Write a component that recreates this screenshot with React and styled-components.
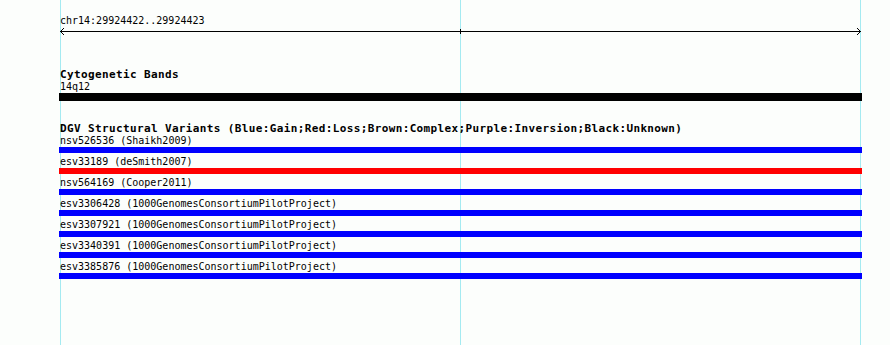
import React from 'react'
import styled, {createGlobalStyle} from 'styled-components'

const GlobalStyle = createGlobalStyle`
  html, body {
    margin: 0;
    padding: 0;
    background: #fcfefc;
  }
`

const GRID = '#a4eaf1'

const Panel = styled.div`
  width: 890px;
  height: 345px;
  box-sizing: border-box;
  padding: 15px 0 0 59px;
  display: flex;
  flex-direction: column;
  background-color: #fcfefc;
  background-image:
    linear-gradient(${GRID}, ${GRID}),
    linear-gradient(${GRID}, ${GRID}),
    linear-gradient(${GRID}, ${GRID});
  background-size: 1px 100%;
  background-position: 60px 0, 460px 0, 860px 0;
  background-repeat: no-repeat;
  font-family: "DejaVu Sans Mono", "Liberation Mono", monospace;
  color: #000;
`

const Label = styled.div`
  margin-left: 1px;
  font-size: 10px;
  line-height: 12px;
  height: 12px;
  white-space: nowrap;
`

const TrackTitle = styled.div`
  margin-left: 1px;
  margin-top: ${p => p.$top}px;
  font-size: 11px;
  font-weight: bold;
  letter-spacing: 0.37px;
  line-height: 12px;
  height: 12px;
  white-space: nowrap;
`

const Section = styled.div`
  display: flex;
  flex-direction: column;
`

const RulerSvg = styled.svg`
  display: block;
  margin-left: 1px;
`

const Bar = styled.div`
  width: 803px;
  height: ${p => p.$h}px;
  margin-top: ${p => p.$top || 0}px;
  margin-bottom: ${p => p.$bottom || 0}px;
  background: ${p => p.$color};
`

const Rows = styled.div`
  display: flex;
  flex-direction: column;
`

const Row = styled.div`
  display: flex;
  flex-direction: column;
`

const variants = [
  {id: 'nsv526536', study: 'Shaikh2009', color: '#0000ff'},
  {id: 'esv33189', study: 'deSmith2007', color: '#ff0000'},
  {id: 'nsv564169', study: 'Cooper2011', color: '#0000ff'},
  {id: 'esv3306428', study: '1000GenomesConsortiumPilotProject', color: '#0000ff'},
  {id: 'esv3307921', study: '1000GenomesConsortiumPilotProject', color: '#0000ff'},
  {id: 'esv3340391', study: '1000GenomesConsortiumPilotProject', color: '#0000ff'},
  {id: 'esv3385876', study: '1000GenomesConsortiumPilotProject', color: '#0000ff'},
]

const Ruler = () => (
  <RulerSvg width="801" height="9" viewBox="0 0 801 9">
    <g stroke="#000" strokeWidth="1" fill="none" shapeRendering="crispEdges">
      <line x1="0" y1="4.5" x2="801" y2="4.5" />
      <line x1="400.5" y1="2" x2="400.5" y2="7" />
    </g>
    <g stroke="#000" strokeWidth="1" fill="none">
      <polyline points="4,1 0.5,4.5 4,8" />
      <polyline points="797,1 800.5,4.5 797,8" />
    </g>
  </RulerSvg>
)

export default function App() {
  return (
    <>
      <GlobalStyle />
      <Panel>
        <Section>
          <Label>chr14:29924422..29924423</Label>
          <Ruler />
        </Section>

        <Section>
          <TrackTitle $top={33}>Cytogenetic Bands</TrackTitle>
          <Label>14q12</Label>
          <Bar $h={8} $color="#000" />
        </Section>

        <Section>
          <TrackTitle $top={22}>
            DGV Structural Variants (Blue:Gain;Red:Loss;Brown:Complex;Purple:Inversion;Black:Unknown)
          </TrackTitle>
          <Rows>
            {variants.map(v => (
              <Row key={v.id}>
                <Label>{v.id} ({v.study})</Label>
                <Bar $h={6} $bottom={3} $color={v.color} />
              </Row>
            ))}
          </Rows>
        </Section>
      </Panel>
    </>
  )
}
